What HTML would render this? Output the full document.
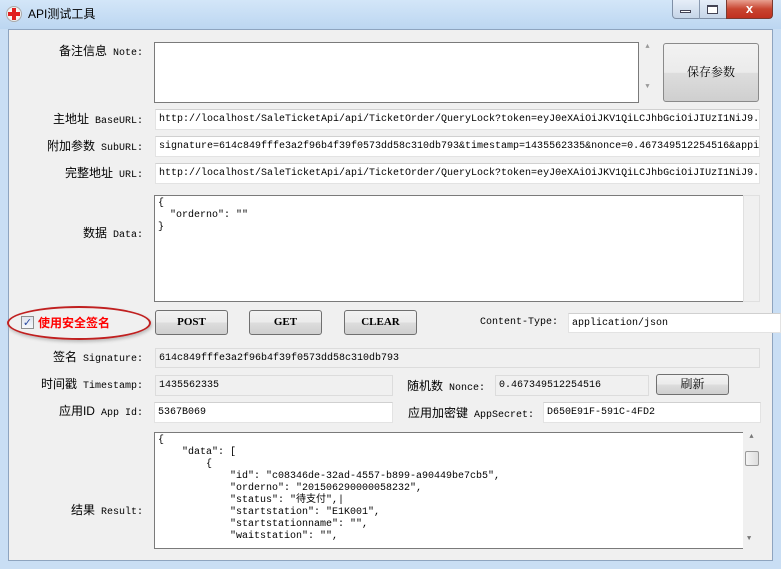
<!DOCTYPE html>
<html><head><meta charset="utf-8"><style>
*{box-sizing:border-box;margin:0;padding:0}
body{width:781px;height:569px;overflow:hidden;background:#c9def4;font:10px "Liberation Mono","Noto Sans CJK SC",monospace;color:#000;position:relative}
.a{position:absolute}
.cj{font-family:"Liberation Sans","Noto Sans CJK SC",sans-serif;font-size:12px}
.lbl{position:absolute;right:638px;white-space:nowrap;line-height:14px}
.in{position:absolute;background:#fff;border:1px solid #e3e3e3;border-top-color:#d0d0d0;padding:4px 3px 0;white-space:nowrap;overflow:hidden;line-height:12px}
.ro{background:#f0f0f0;border-color:#dcdcdc}
.ta{position:absolute;background:#fff;border:1px solid #7a7a7a;padding:2px 3px;white-space:pre;overflow:hidden;line-height:12px}
.btn{position:absolute;border:1px solid #707070;border-radius:3px;background:linear-gradient(#f2f2f2 0%,#ebebeb 50%,#dddddd 51%,#cfcfcf 100%);text-align:center;font-weight:bold;font-family:"Liberation Serif","Noto Serif CJK SC",serif;font-size:11px}
.sb{position:absolute;background:#f0f0f0}
</style></head><body>
<div class="a" style="left:0;top:0;width:781px;height:29px;background:linear-gradient(#d3e6f8,#bcd6f1)"></div>
<div class="a" style="left:6px;top:6px;width:16px;height:16px;border-radius:50%;background:radial-gradient(#fff 30%,#ddd);border:1px solid #aaa"></div>
<div class="a" style="left:12px;top:8px;width:4px;height:12px;background:#e02020"></div>
<div class="a" style="left:8px;top:12px;width:12px;height:4px;background:#e02020"></div>
<div class="a cj" style="left:28px;top:5px;font-size:12px">API测试工具</div>
<div class="a" style="left:672px;top:0;width:55px;height:19px;border:1px solid #7f8fa6;border-top:none;border-radius:0 0 0 4px;background:linear-gradient(#e6eef8,#c6d5e8)"></div>
<div class="a" style="left:699px;top:0;width:1px;height:19px;background:#8a9ab0"></div>
<div class="a" style="left:680px;top:10px;width:11px;height:3px;border:1px solid #445;background:#fff"></div>
<div class="a" style="left:707px;top:5px;width:11px;height:9px;border:1px solid #445;border-top-width:2px;background:#fff"></div>
<div class="a" style="left:726px;top:0;width:47px;height:19px;border:1px solid #7a3a30;border-top:none;border-radius:0 0 4px 0;background:linear-gradient(#e8a090,#c84530 50%,#c03020);color:#fff;font:bold 13px 'Liberation Sans';text-align:center;line-height:18px">x</div>
<div class="a" style="left:8px;top:29px;width:765px;height:532px;background:#f0f0f0;border:1px solid #8ea4bf"></div>

<div class="lbl" style="top:44px"><span class="cj">备注信息</span> Note:</div>
<div class="ta" style="left:154px;top:42px;width:485px;height:61px"></div>
<div class="sb" style="left:639px;top:42px;width:17px;height:61px;color:#999;font-size:7px;text-align:center;line-height:10px">▲<br><br><br><br>▼</div>
<div class="btn cj" style="left:663px;top:43px;width:96px;height:59px;line-height:57px;font-weight:normal;font-size:12px;border-color:#8a8a8a">保存参数</div>

<div class="lbl" style="top:112px"><span class="cj">主地址</span> BaseURL:</div>
<div class="in" style="left:155px;top:109px;width:605px;height:21px">http://localhost/SaleTicketApi/api/TicketOrder/QueryLock?token=eyJ0eXAiOiJKV1QiLCJhbGciOiJIUzI1NiJ9.</div>
<div class="lbl" style="top:139px"><span class="cj">附加参数</span> SubURL:</div>
<div class="in" style="left:155px;top:136px;width:605px;height:21px">signature=614c849fffe3a2f96b4f39f0573dd58c310db793&amp;timestamp=1435562335&amp;nonce=0.467349512254516&amp;appi</div>
<div class="lbl" style="top:166px"><span class="cj">完整地址</span> URL:</div>
<div class="in" style="left:155px;top:163px;width:605px;height:21px">http://localhost/SaleTicketApi/api/TicketOrder/QueryLock?token=eyJ0eXAiOiJKV1QiLCJhbGciOiJIUzI1NiJ9.</div>

<div class="lbl" style="top:226px"><span class="cj">数据</span> Data:</div>
<div class="ta" style="left:154px;top:195px;width:590px;height:107px">{
  "orderno": ""
}</div>
<div class="sb" style="left:743px;top:195px;width:17px;height:107px;border:1px solid #e0e0e0"></div>

<div class="a" style="left:7px;top:306px;width:144px;height:34px;border:2px solid #c02020;border-radius:50%;box-shadow:1px 2px 3px #bbb"></div>
<div class="a" style="left:21px;top:316px;width:13px;height:13px;border:1px solid #8e8f8f;background:linear-gradient(#dfe4ee,#f6f8fb);color:#2a4aa0;font:bold 11px 'DejaVu Sans';line-height:11px;text-align:center">✓</div>
<div class="a cj" style="left:38px;top:314px;color:#f00;font-weight:bold;font-size:12px">使用安全签名</div>
<div class="btn" style="left:155px;top:310px;width:73px;height:25px;line-height:23px">POST</div>
<div class="btn" style="left:249px;top:310px;width:73px;height:25px;line-height:23px">GET</div>
<div class="btn" style="left:344px;top:310px;width:73px;height:25px;line-height:23px">CLEAR</div>
<div class="a" style="left:480px;top:317px">Content-Type:</div>
<div class="in" style="left:568px;top:313px;width:213px;height:20px">application/json</div>

<div class="lbl" style="top:350px"><span class="cj">签名</span> Signature:</div>
<div class="in ro" style="left:155px;top:348px;width:605px;height:20px">614c849fffe3a2f96b4f39f0573dd58c310db793</div>
<div class="lbl" style="top:377px"><span class="cj">时间戳</span> Timestamp:</div>
<div class="in ro" style="left:155px;top:375px;width:238px;height:21px">1435562335</div>
<div class="a" style="left:407px;top:377px"><span class="cj">随机数</span> Nonce:</div>
<div class="in ro" style="left:495px;top:375px;width:154px;height:21px">0.467349512254516</div>
<div class="btn cj" style="left:656px;top:374px;width:73px;height:21px;line-height:19px;font-weight:normal;font-size:12px">刷新</div>
<div class="lbl" style="top:404px"><span class="cj">应用ID</span> App Id:</div>
<div class="in" style="left:154px;top:402px;width:239px;height:21px">5367B069</div>
<div class="a" style="left:408px;top:404px"><span class="cj">应用加密键</span> AppSecret:</div>
<div class="in" style="left:543px;top:402px;width:218px;height:21px">D650E91F-591C-4FD2</div>

<div class="lbl" style="top:503px"><span class="cj">结果</span> Result:</div>
<div class="ta" style="left:154px;top:432px;width:590px;height:117px">{
    "data": [
        {
            "id": "c08346de-32ad-4557-b899-a90449be7cb5",
            "orderno": "201506290000058232",
            "status": "待支付",|
            "startstation": "E1K001",
            "startstationname": "",
            "waitstation": "",</div>
<div class="sb" style="left:743px;top:432px;width:17px;height:117px;color:#777;font-size:7px;text-align:center;line-height:10px">▲</div>
<div class="a" style="left:745px;top:451px;width:14px;height:15px;border:1px solid #999;border-radius:2px;background:linear-gradient(90deg,#f4f4f4,#ddd)"></div>
<div class="a" style="left:747px;top:535px;color:#777;font-size:7px">▼</div>
</body></html>
